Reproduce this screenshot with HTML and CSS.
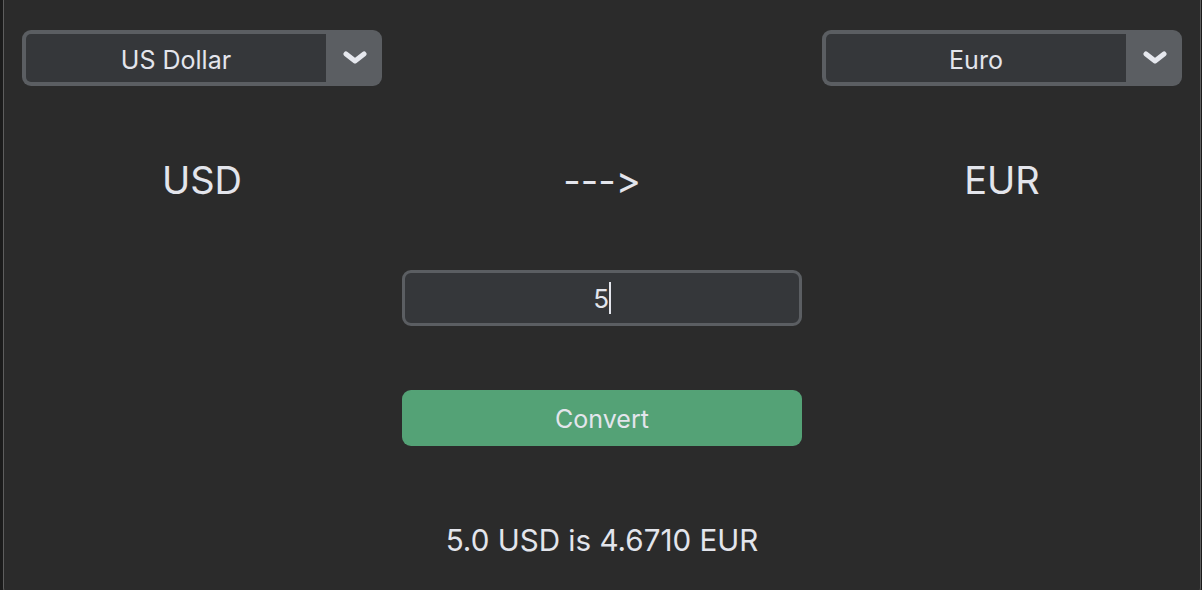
FILE: index.html
```html
<!DOCTYPE html>
<html>
<head>
<meta charset="utf-8">
<link rel="stylesheet" href="styles.css">
</head>
<body>
<div class="window">
  <div class="grid row-top">
    <div class="combo">
      <div class="combo-field">US Dollar</div>
      <div class="combo-btn">
        <svg width="24" height="14" viewBox="0 0 24 14"><path d="M3 3 L12 10 L21 3" fill="none" stroke="#e6e8ee" stroke-width="5" stroke-linecap="round" stroke-linejoin="round"/></svg>
      </div>
    </div>
    <div></div>
    <div class="combo">
      <div class="combo-field">Euro</div>
      <div class="combo-btn">
        <svg width="24" height="14" viewBox="0 0 24 14"><path d="M3 3 L12 10 L21 3" fill="none" stroke="#e6e8ee" stroke-width="5" stroke-linecap="round" stroke-linejoin="round"/></svg>
      </div>
    </div>
  </div>
  <div class="grid row-labels">
    <div class="big">USD</div>
    <div class="big">---&gt;</div>
    <div class="big">EUR</div>
  </div>
  <div class="grid row-input">
    <div></div>
    <div class="input"><span class="value">5</span><span class="caret"></span></div>
    <div></div>
  </div>
  <div class="grid row-button">
    <div></div>
    <div class="button">Convert</div>
    <div></div>
  </div>
  <div class="result">5.0 USD is 4.6710 EUR</div>
</div>
</body>
</html>
```
FILE: styles.css
```css
html, body {
  margin: 0;
  padding: 0;
  background: #1b1b1b;
  height: 590px;
  overflow: hidden;
}
body {
  font-family: Inter, "Noto Sans", sans-serif;
  font-feature-settings: "calt" 0, "liga" 0;
  color: #e3e5ec;
}
.window {
  margin-left: 3px;
  width: 1198px;
  height: 600px;
  background: #2b2b2b;
  border: 1px solid #5e5e5e;
  border-top: none;
  border-radius: 0 0 13px 13px;
  padding-top: 30px;
  box-sizing: border-box;
  display: flex;
  flex-direction: column;
  align-items: center;
}
.grid {
  display: grid;
  grid-template-columns: 360px 400px 360px;
  column-gap: 20px;
}
.combo {
  height: 56px;
  background: #5b5e62;
  border-radius: 9px;
  padding: 4px 0 4px 4px;
  box-sizing: border-box;
  display: flex;
}
.combo-field {
  width: 300px;
  background: #35373a;
  border-radius: 5px 0 0 5px;
  display: flex;
  align-items: center;
  justify-content: center;
  font-size: 25px;
  padding-top: 3px;
  box-sizing: border-box;
}
.combo-btn {
  flex: 1;
  display: flex;
  align-items: center;
  justify-content: center;
  padding-left: 2px;
}
.row-labels {
  margin-top: 70px;
  height: 48px;
}
.big {
  font-size: 38px;
  line-height: 48px;
  text-align: center;
}
.row-input {
  margin-top: 66px;
}
.input {
  height: 56px;
  box-sizing: border-box;
  border: 3px solid #5b5e62;
  border-radius: 9px;
  background: #35373a;
  display: flex;
  align-items: center;
  justify-content: center;
  font-size: 26px;
}
.caret {
  display: inline-block;
  width: 1.5px;
  height: 32px;
  background: #e3e5ec;
}
.row-button {
  margin-top: 64px;
}
.button {
  height: 56px;
  border-radius: 9px;
  background: #54a276;
  display: flex;
  align-items: center;
  justify-content: center;
  font-size: 25px;
  padding-top: 2px;
  box-sizing: border-box;
}
.result {
  margin-top: 76px;
  font-size: 29.6px;
  line-height: 36px;
  text-align: center;
}
```
